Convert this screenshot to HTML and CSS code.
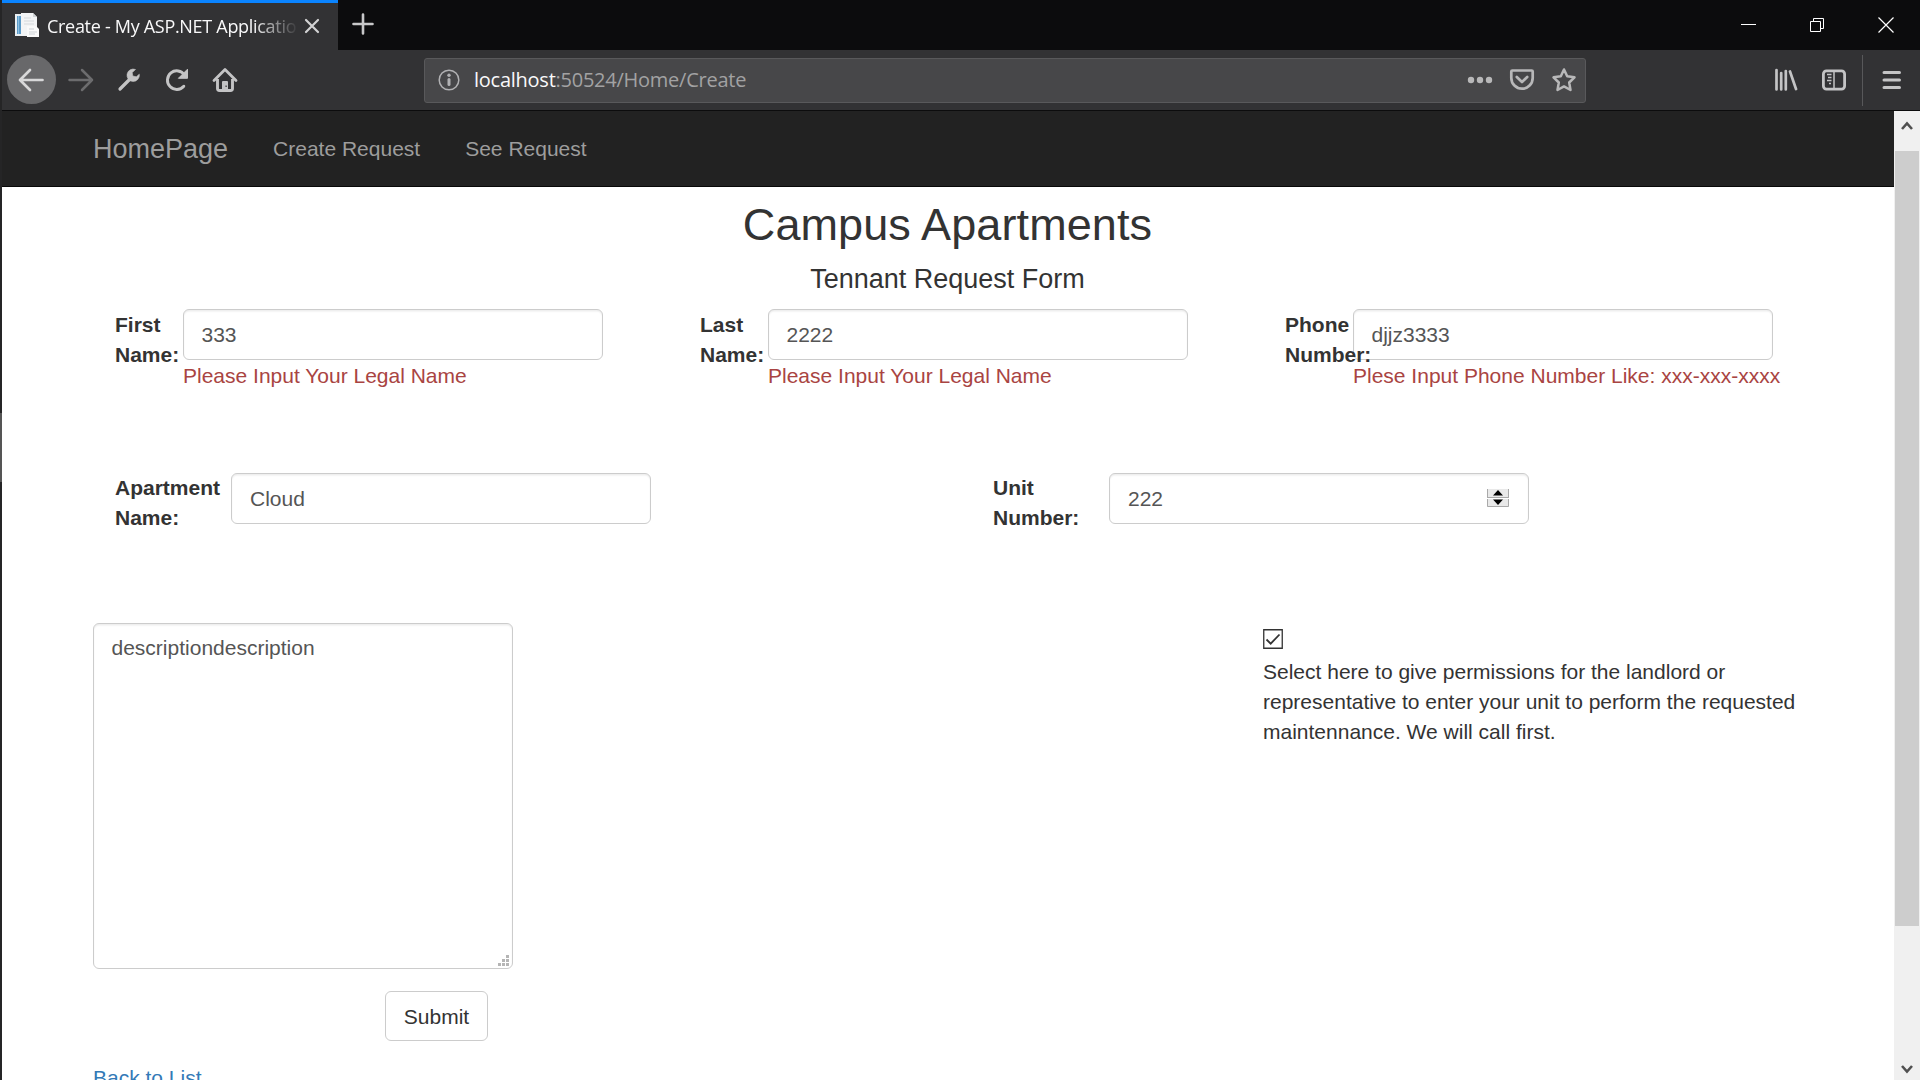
FILE: index.html
```html
<!DOCTYPE html>
<html lang="en">
<head>
<meta charset="utf-8">
<title>Create - My ASP.NET Application</title>
<link rel="stylesheet" href="styles.css">
</head>
<body>
<div class="edge"><div class="edge-light"></div></div>
<div class="window">
  <header class="tabbar">
    <div class="tab">
      <svg class="favicon" width="25" height="25" viewBox="0 0 25 25">
        <path d="M0 1h9v22H0z" fill="#e9eef2"/><path d="M2 3h4v18H2z" fill="#5b9bc9"/><path d="M3 3h1v18H3z" fill="#8fbfe0"/>
        <path d="M6 0h12l4 4v19H6z" fill="#f3f4f5"/><path d="M18 0v4h4z" fill="#cfd3d6"/>
        <path d="M9 5h7M9 8h10M9 11h10" stroke="#d5d9dc" stroke-width="1"/>
        <path d="M12 13h9l3 3v8H12z" fill="#fafafa"/><path d="M14 16h5M14 19h8M14 21h6" stroke="#cdd2d6"/>
      </svg>
      <span class="tab-title">Create - My ASP.NET Application</span>
      <svg class="tab-close" width="16" height="16" viewBox="0 0 16 16"><path d="M2 2l12 12M14 2L2 14" stroke="#d2d2d3" stroke-width="2.2" stroke-linecap="round"/></svg>
    </div>
    <svg class="new-tab" width="22" height="22" viewBox="0 0 22 22"><path d="M11 1.5v19M1.500 11h19" stroke="#c8c8c9" stroke-width="2.6" stroke-linecap="round"/></svg>
    <div class="controls">
      <svg width="16" height="16" viewBox="0 0 16 16"><path d="M1 7.500h15" stroke="#fff"/></svg>
      <svg width="16" height="16" viewBox="0 0 16 16"><path d="M1.500 4.500h10v10h-10zM4.500 4.500v-3h10v10h-3" fill="none" stroke="#fff"/></svg>
      <svg width="16" height="16" viewBox="0 0 16 16"><path d="M.5.5l15 15M15.500.5l-15 15" stroke="#fff" stroke-width="1.200"/></svg>
    </div>
  </header>
  <nav class="toolbar">
    <span class="back"><svg width="26" height="24" viewBox="0 0 26 24"><path d="M24.500 12H2M12 2L2 12l10 10" fill="none" stroke="#d8d8d9" stroke-width="2.700" stroke-linecap="round" stroke-linejoin="round"/></svg></span>
    <svg class="forward" width="26" height="24" viewBox="0 0 26 24"><path d="M1.500 12H24M14 2l10 10-10 10" fill="none" stroke="#6c6c6e" stroke-width="2.500" stroke-linecap="round" stroke-linejoin="round"/></svg>
    <svg class="wrench" width="24" height="24" viewBox="0 0 24 24"><path d="M3 21L14 10" stroke="#c4c4c5" stroke-width="3.200" stroke-linecap="round"/><path d="M18.500 1.500A6.200 6.200 0 1 0 22.300 6.200L19.300 8.800 15.800 8 15.200 4.600Z" fill="#c4c4c5" stroke="#c4c4c5" stroke-width=".6" stroke-linejoin="round"/></svg>
    <svg class="reload" width="24" height="24" viewBox="0 0 24 24"><path d="M18.800 18.200A9.300 9.300 0 1 1 19.500 7" fill="none" stroke="#c4c4c5" stroke-width="2.900" stroke-linecap="round"/><path d="M22.500 1.200V10.300H13.400Z" fill="#c4c4c5" stroke="#c4c4c5" stroke-linejoin="round"/></svg>
    <svg class="home" width="26" height="26" viewBox="0 0 26 26"><path d="M2 13.500L13 2.500l11 11" fill="none" stroke="#c4c4c5" stroke-width="2.800" stroke-linecap="round" stroke-linejoin="round"/><path d="M5.500 12v9.500a2 2 0 0 0 2 2h11a2 2 0 0 0 2-2V12" fill="none" stroke="#c4c4c5" stroke-width="2.900"/><path d="M10 23v-8a1 1 0 0 1 1-1h4a1 1 0 0 1 1 1v8z" fill="#c4c4c5"/><path d="M13.500 18.500h1.200v1.500h-1.200z" fill="#323234"/></svg>
    <div class="urlbar">
      <svg width="22" height="22" viewBox="0 0 22 22"><circle cx="11" cy="11" r="9.800" fill="none" stroke="#b1b1b3" stroke-width="1.500"/><circle cx="11" cy="6.300" r="1.700" fill="#b1b1b3"/><path d="M11 10.500v5" stroke="#b1b1b3" stroke-width="3" stroke-linecap="round"/></svg>
      <span class="url"><b>localhost</b>:50524/Home/Create</span>
      <svg class="dots" width="26" height="8" viewBox="0 0 26 8"><g fill="#b8b8b9"><circle cx="4" cy="4" r="3.200"/><circle cx="13" cy="4" r="3.200"/><circle cx="22" cy="4" r="3.200"/></g></svg>
      <svg class="pocket" width="26" height="24" viewBox="0 0 26 24"><path d="M3.300 2.500h19.400a1 1 0 0 1 1 1V10a10.700 10.700 0 0 1-21.400 0V3.500a1 1 0 0 1 1-1z" fill="none" stroke="#b8b8b9" stroke-width="2.700"/><path d="M7.800 9l5.200 5 5.200-5" fill="none" stroke="#b8b8b9" stroke-width="2.700" stroke-linecap="round" stroke-linejoin="round"/></svg>
      <svg class="star" width="26" height="26" viewBox="0 0 26 26"><path d="M13 2.500l3.200 6.800 7.300 1-5.300 5.200 1.300 7.500-6.500-3.600L6.500 23l1.300-7.500L2.500 10.300l7.300-1z" fill="none" stroke="#b8b8b9" stroke-width="2.500" stroke-linejoin="round"/></svg>
    </div>
    <svg class="library" width="24" height="24" viewBox="0 0 24 24"><path d="M2.500 2v19.500M7.200 5v16.500M11.800 3v18.500M16 3.500l6 17.500" stroke="#c4c4c5" stroke-width="2.700" stroke-linecap="round"/></svg>
    <svg class="sidebar" width="26" height="24" viewBox="0 0 26 24"><rect x="2.400" y="2.900" width="21.200" height="18.200" rx="3" fill="none" stroke="#c4c4c5" stroke-width="2.800"/><path d="M13 3v18" stroke="#c4c4c5" stroke-width="1.500"/><path d="M6 6.500h4.500M7 9.500h3.500M6 12.500h4.500M8 15.500h2" stroke="#c4c4c5" stroke-width="1.400"/></svg>
    <span class="divider"></span>
    <svg class="menu" width="20" height="20" viewBox="0 0 20 20"><path d="M2 2.500h15.500M2 10h15.500M2 17.500h15.500" stroke="#c4c4c5" stroke-width="3" stroke-linecap="round"/></svg>
  </nav>
  <div class="viewport">
    <div class="page">
      <nav class="navbar">
        <a class="brand">HomePage</a>
        <a class="link">Create Request</a>
        <a class="link">See Request</a>
      </nav>
      <form class="form">
        <h2>Campus Apartments</h2>
        <h4>Tennant Request Form</h4>
        <div class="row names">
          <div class="field"><label>First Name:</label><div><input class="control" value="333"><span class="error">Please Input Your Legal Name</span></div></div>
          <div class="field"><label>Last Name:</label><div><input class="control" value="2222"><span class="error">Please Input Your Legal Name</span></div></div>
          <div class="field"><label>Phone Number:</label><div><input class="control" value="djjz3333"><span class="error">Plese Input Phone Number Like: xxx-xxx-xxxx</span></div></div>
        </div>
        <div class="row unit">
          <div class="field"><label>Apartment Name:</label><input class="control" value="Cloud"></div>
          <div class="field"><label>Unit Number:</label><div class="number"><input class="control" value="222">
            <svg class="spinner" width="22" height="18" viewBox="0 0 22 18"><path d="M0 0h22v18H0z" fill="#e9e9e9"/><path d="M.5 0v17.500h21V0M0 8.500h22" fill="none" stroke="#a9a9a9"/><path d="M0 9.500h22" stroke="#fff"/><path d="M11 1l5 5.500H6zM11 16l5-5.500H6z" fill="#000"/></svg></div></div>
        </div>
        <div class="row details">
          <div class="description"><textarea class="control">descriptiondescription</textarea>
            <svg class="grip" width="11" height="11" viewBox="0 0 11 11"><path d="M8 0h3v3H8zM4 4h3v3H4zM8 4h3v3H8zM0 8h3v3H0zM4 8h3v3H4zM8 8h3v3H8z" fill="#b5b5b5"/></svg></div>
          <div class="permission">
            <svg width="20" height="20" viewBox="0 0 20 20"><path d="M.75.75h18.500v18.500H.75z" fill="#fff" stroke="#333" stroke-width="1.300"/><path d="M3.500 10.500l4.200 4.200L16.500 5.500" fill="none" stroke="#333" stroke-width="1.800"/></svg>
            <p>Select here to give permissions for the landlord or representative to enter your unit to perform the requested maintennance. We will call first.</p>
          </div>
        </div>
        <button class="submit" type="button">Submit</button>
        <a class="back-link">Back to List</a>
      </form>
    </div>
    <div class="scrollbar">
      <svg width="12" height="10" viewBox="0 0 12 10"><path d="M1 8l5-5.500L11 8" fill="none" stroke="#505050" stroke-width="2.600"/></svg>
      <div class="thumb"></div>
      <svg class="down" width="12" height="10" viewBox="0 0 12 10"><path d="M1 2l5 5.500L11 2" fill="none" stroke="#505050" stroke-width="2.600"/></svg>
    </div>
  </div>
</div>
</body>
</html>
```
FILE: styles.css
```css
* { box-sizing: border-box; }
body { margin: 0; width: 1920px; height: 1080px; overflow: hidden; display: flex; background: #fff; color: #333; font: 21px/30px "Liberation Sans", Arial, sans-serif; }
svg { display: block; flex: none; }

.edge { width: 2px; height: 1080px; background: #252526; padding-top: 413px; }
.edge-light { height: 69px; background: #555; }
.window { width: 1918px; height: 1080px; display: flex; flex-direction: column; }

.tabbar { height: 50px; flex: none; display: flex; background: #0c0c0d; }
.tab { width: 336px; display: flex; align-items: center; padding: 0 0 2px 13px; background: #323234; border-top: 3px solid #0a84ff; }
.tab-title { width: 250px; margin-left: 7px; overflow: hidden; white-space: nowrap; color: #f9f9fa; font: 18px/30px "Open Sans", sans-serif; letter-spacing: -.3px; -webkit-mask-image: linear-gradient(to right, #000 205px, transparent 252px); mask-image: linear-gradient(to right, #000 205px, transparent 252px); }
.tab-close { margin-left: 7px; }
.new-tab { margin: 13px 0 0 14px; }
.controls { display: flex; gap: 53px; margin: 17px 26px 0 auto; }

.toolbar { height: 61px; flex: none; display: flex; align-items: center; background: #323234; border-bottom: 1px solid #0c0c0d; }
.back { width: 49px; height: 49px; margin: 0 0 1px 5px; border-radius: 50%; background: #68686a; display: flex; align-items: center; justify-content: center; }
.back svg { margin-right: 1px; }
.forward { margin-left: 12px; }
.wrench { margin-left: 23px; }
.reload { margin-left: 24px; }
.home { margin-left: 23px; }
.urlbar { width: 1162px; height: 45px; margin-left: 186px; padding: 0 8px 0 13px; display: flex; align-items: center; background: #474749; border: 1px solid #59595b; border-radius: 3px; }
.url { margin: 0 auto 0 14px; color: #a2a2a3; font: 20px/30px "Open Sans", sans-serif; letter-spacing: -.25px; }
.url b { color: #f9f9fa; font-weight: 400; }
.pocket { margin-left: 16px; }
.star { margin-left: 16px; }
.library { margin-left: 188px; }
.sidebar { margin-left: 23px; }
.divider { width: 1px; height: 51px; margin-left: 15px; background: #58585a; }
.menu { margin-left: 19px; }

.viewport { height: 969px; display: flex; }
.page { width: 1892px; height: 969px; overflow: hidden; background: #fff; }
.navbar { height: 76px; padding: 23px 0 0 91px; display: flex; background: #222; border-bottom: 1px solid #080808; color: #9d9d9d; }
.brand { font-size: 27px; margin-right: 45px; }
.link { margin-right: 45px; }

.form { padding: 13px 0 0 91px; }
h2, h4 { width: 1709px; margin: 0; font-weight: 400; text-align: center; }
h2 { font-size: 45px; line-height: 50px; letter-spacing: .1px; }
h4 { font-size: 27px; line-height: 30px; margin-top: 14px; }
.row { display: flex; }
.field { display: flex; flex: none; }
.field label { flex: none; padding-top: 1px; font-weight: 700; position: relative; z-index: 1; }
.control { display: block; width: 420px; height: 51px; margin: 0; padding: 9px 18px 9px 17.5px; border: 1px solid #ccc; border-radius: 6px; background: #fff; box-shadow: inset 0 1.5px 1.5px rgba(0, 0, 0, .075); color: #555; font: inherit; outline: 0; }
.names { height: 164px; margin-top: 15px; padding-left: 22px; }
.names .field { width: 585px; }
.names label { width: 68px; }
.error { display: block; margin-top: 1px; white-space: nowrap; color: #a94442; }
.unit { height: 150px; padding-left: 22px; }
.unit .field { width: 878px; }
.unit label { width: 116px; padding-top: 0; }
.unit .control { padding-left: 18px; }
.number { position: relative; }
.spinner { position: absolute; right: 20px; top: 16px; }
.details { height: 368px; }
.description { position: relative; width: 1170px; }
textarea.control { height: 346px; resize: none; overflow: hidden; }
.grip { position: absolute; left: 405px; top: 332px; }
.permission { width: 540px; padding-top: 6px; }
.permission p { margin: 8px 0 0; }
.submit { display: block; width: 103px; height: 50px; margin: 0 0 0 292px; padding: 1px 0 0; border: 1px solid #ccc; border-radius: 6px; background: #fff; color: #333; font: inherit; }
.back-link { display: block; margin-top: 22px; color: #337ab7; }

.scrollbar { width: 26px; display: flex; flex-direction: column; align-items: center; background: #f0f0f0; padding: 10px 0 6px; }
.thumb { width: 24px; height: 775px; margin-top: 20px; background: #cdcdcd; }
.down { margin-top: auto; }
```
